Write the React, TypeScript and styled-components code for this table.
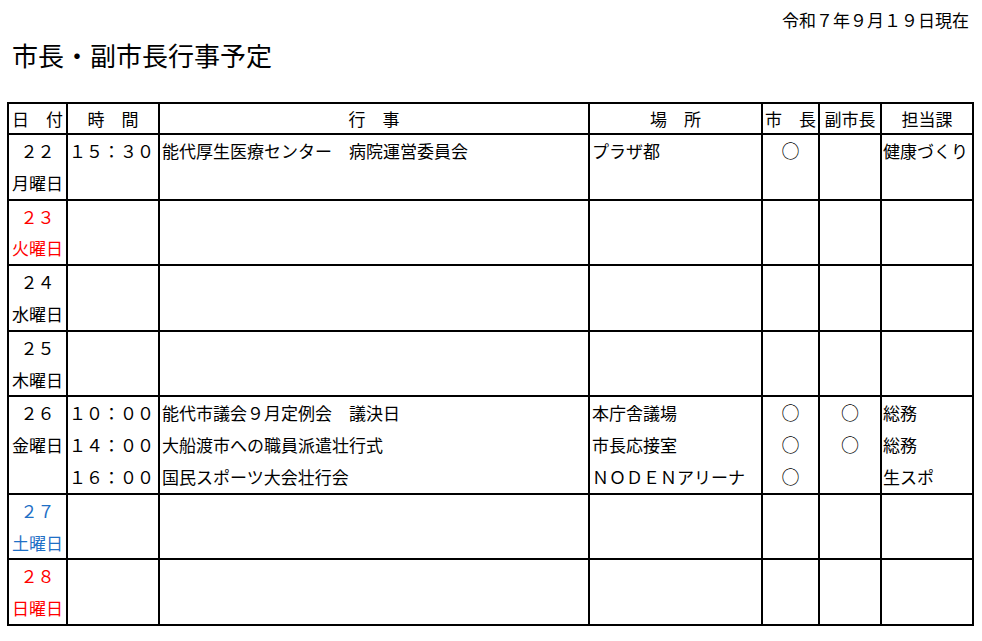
import React from "react";
import styled, { createGlobalStyle } from "styled-components";

const GlobalStyle = createGlobalStyle`
  html, body { margin: 0; padding: 0; background: #ffffff; }
  body {
    font-family: "Noto Sans CJK JP", "Noto Sans", sans-serif;
    color: #000000;
  }
`;

const Page = styled.div`
  width: 982px;
  height: 641px;
  overflow: hidden;
  display: flex;
  flex-direction: column;
`;

const AsOf = styled.div`
  height: 40px;
  line-height: 40px;
  font-size: 17px;
  text-align: right;
  padding-right: 13px;
`;

const Title = styled.h1`
  margin: 0 0 32px 12px;
  height: 30px;
  line-height: 30px;
  font-size: 26px;
  font-weight: 400;
`;

const Table = styled.table`
  margin-left: 7px;
  border-collapse: collapse;
  table-layout: fixed;
  width: 967px;
  font-size: 17px;
`;

const HeadCell = styled.th<{ $align?: "left" | "center" }>`
  border: 2px solid #000;
  height: 29px;
  padding: 0 0 0 ${(p) => (p.$align === "left" ? "3px" : "0")};
  font-weight: 400;
  text-align: ${(p) => p.$align ?? "center"};
  line-height: 29px;
  white-space: nowrap;
`;

type Align = "left" | "center" | "right";

const Cell = styled.td<{ $align?: Align; $color?: string; $padL?: number; $padR?: number }>`
  border: 2px solid #000;
  padding: 0 ${(p) => p.$padR ?? 0}px 0 ${(p) => p.$padL ?? 0}px;
  vertical-align: top;
  text-align: ${(p) => p.$align ?? "left"};
  color: ${(p) => p.$color ?? "#000"};
  white-space: nowrap;
  overflow: hidden;
`;

const Line = styled.div`
  height: 31.8px;
  line-height: 31.8px;
`;

const Mark = styled.span`
  display: inline-block;
  font-size: 18px;
`;

type Item = {
  time: string;
  event: string;
  place: string;
  mayor: boolean;
  vice: boolean;
  dept: string;
};

type Day = {
  day: string;
  weekday: string;
  color: string;
  items: Item[];
};

const RED = "#ff0000";
const BLUE = "#1f70c6";

const days: Day[] = [
  {
    day: "２２",
    weekday: "月曜日",
    color: "#000",
    items: [
      {
        time: "１５：３０",
        event: "能代厚生医療センター　病院運営委員会",
        place: "プラザ都",
        mayor: true,
        vice: false,
        dept: "健康づくり",
      },
    ],
  },
  { day: "２３", weekday: "火曜日", color: RED, items: [] },
  { day: "２４", weekday: "水曜日", color: "#000", items: [] },
  { day: "２５", weekday: "木曜日", color: "#000", items: [] },
  {
    day: "２６",
    weekday: "金曜日",
    color: "#000",
    items: [
      {
        time: "１０：００",
        event: "能代市議会９月定例会　議決日",
        place: "本庁舎議場",
        mayor: true,
        vice: true,
        dept: "総務",
      },
      {
        time: "１４：００",
        event: "大船渡市への職員派遣壮行式",
        place: "市長応接室",
        mayor: true,
        vice: true,
        dept: "総務",
      },
      {
        time: "１６：００",
        event: "国民スポーツ大会壮行会",
        place: "ＮＯＤＥＮアリーナ",
        mayor: true,
        vice: false,
        dept: "生スポ",
      },
    ],
  },
  { day: "２７", weekday: "土曜日", color: BLUE, items: [] },
  { day: "２８", weekday: "日曜日", color: RED, items: [] },
];

function lines(values: React.ReactNode[], count: number) {
  const out: React.ReactNode[] = [];
  for (let i = 0; i < count; i++) {
    out.push(<Line key={i}>{values[i] ?? "\u00a0"}</Line>);
  }
  return out;
}

const mark = (on: boolean) => (on ? <Mark>○</Mark> : "");

export default function App() {
  return (
    <Page>
      <GlobalStyle />
      <AsOf>令和７年９月１９日現在</AsOf>
      <Title>市長・副市長行事予定</Title>
      <Table>
        <colgroup>
          <col style={{ width: 59 }} />
          <col style={{ width: 92 }} />
          <col style={{ width: 430 }} />
          <col style={{ width: 173 }} />
          <col style={{ width: 57 }} />
          <col style={{ width: 62 }} />
          <col style={{ width: 92 }} />
        </colgroup>
        <thead>
          <tr>
            <HeadCell $align="left">日　付</HeadCell>
            <HeadCell>時　間</HeadCell>
            <HeadCell>行　事</HeadCell>
            <HeadCell>場　所</HeadCell>
            <HeadCell>市　長</HeadCell>
            <HeadCell>副市長</HeadCell>
            <HeadCell>担当課</HeadCell>
          </tr>
        </thead>
        <tbody>
          {days.map((d) => {
            const n = Math.max(2, d.items.length);
            return (
              <tr key={d.day}>
                <Cell $align="center" $color={d.color}>
                  {lines([d.day, d.weekday], n)}
                </Cell>
                <Cell $align="right" $padR={4}>
                  {lines(d.items.map((i) => i.time), n)}
                </Cell>
                <Cell $padL={2}>{lines(d.items.map((i) => i.event), n)}</Cell>
                <Cell $padL={2}>{lines(d.items.map((i) => i.place), n)}</Cell>
                <Cell $align="center">
                  {lines(d.items.map((i) => mark(i.mayor)), n)}
                </Cell>
                <Cell $align="center">
                  {lines(d.items.map((i) => mark(i.vice)), n)}
                </Cell>
                <Cell $padL={1}>{lines(d.items.map((i) => i.dept), n)}</Cell>
              </tr>
            );
          })}
        </tbody>
      </Table>
    </Page>
  );
}
